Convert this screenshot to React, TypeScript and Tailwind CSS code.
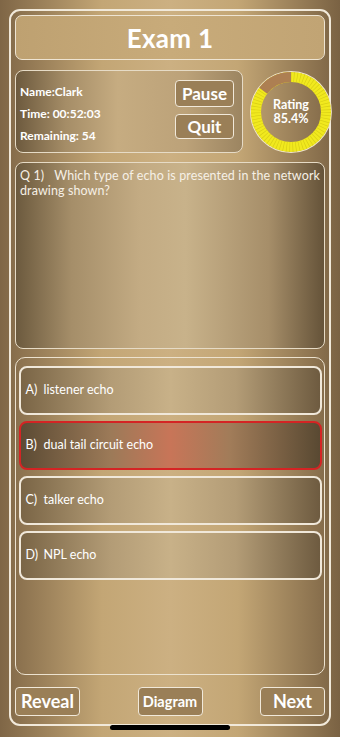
import React from "react";

const answers = [
  { key: "A)", text: "listener echo", picked: false },
  { key: "B)", text: "dual tail circuit echo", picked: true },
  { key: "C)", text: "talker echo", picked: false },
  { key: "D)", text: "NPL echo", picked: false },
];

function RatingRing({ value }: { value: number }) {
  const r = 35;
  const c = 2 * Math.PI * r;
  const miss = (100 - value) / 100;
  return (
    <div className="relative w-[82px] h-[82px] shrink-0">
      <svg width="82" height="82" viewBox="0 0 82 82" className="absolute inset-0">
        <circle cx="41" cy="41" r="40.3" fill="none" stroke="#efe4cc" strokeWidth="1.2" />
        <circle cx="41" cy="41" r={r} fill="none" stroke="#f1e91e" strokeWidth="10" />
        <circle
          cx="41"
          cy="41"
          r={r}
          fill="none"
          stroke="#d9cf16"
          strokeWidth="10"
          strokeDasharray="0.7 2.4"
        />
        <circle
          cx="41"
          cy="41"
          r={r}
          fill="none"
          stroke="#ad7f52"
          strokeWidth="10"
          strokeDasharray={`${miss * c} ${c}`}
          transform={`rotate(${-90 - miss * 360} 41 41)`}
        />
      </svg>
      <div className="absolute inset-0 flex flex-col items-center justify-center text-white font-bold text-[12.5px] leading-[14px]">
        <span>Rating</span>
        <span>{value}%</span>
      </div>
    </div>
  );
}

function SmallButton({ label, cls }: { label: string; cls: string }) {
  return (
    <div
      className={`flex items-center justify-center rounded-[4px] border-[1.5px] border-[#f1e9da] bg-[#9a7f57] text-white font-bold ${cls}`}
    >
      {label}
    </div>
  );
}

export default function App() {
  return (
    <div
      className="w-[340px] h-[737px] overflow-hidden pt-[9px] px-[9px] bg-[linear-gradient(to_right,#7f6646,#c3a675_30%,#ccb082_50%,#c3a675_70%,#7a6243)]"
      style={{ fontFamily: "Lato, 'Open Sans', 'Liberation Sans', sans-serif" }}
    >
      <div className="relative h-[717px] rounded-[11px] border-2 border-[#f1e9da] px-[4px] pt-[4px] flex flex-col">
        {/* title */}
        <div className="h-[45px] rounded-[7px] border-[1.5px] border-[#eee4d2] bg-[linear-gradient(to_right,#bea171,#c8ab7a_50%,#c1a474)] flex items-center justify-center">
          <span className="text-white font-bold text-[26px] leading-none tracking-[0.3px]">Exam 1</span>
        </div>

        {/* info row */}
        <div className="mt-[10px] flex items-center">
          <div className="w-[228px] h-[83px] shrink-0 rounded-[8px] border-[1.5px] border-[#e6dbc6] bg-[linear-gradient(to_right,#6d5a3e,#a58d67_22%,#c6ac81_45%,#bca279_75%,#9c8561)] flex items-center justify-between pl-[4px] pr-[8px]">
            <div className="flex flex-col gap-[7px] mt-[4px] text-white font-bold text-[12px] leading-[15px]">
              <span>Name:Clark</span>
              <span>Time: 00:52:03</span>
              <span>Remaining: 54</span>
            </div>
            <div className="flex flex-col gap-[7px] mt-[-4px]">
              <SmallButton label="Pause" cls="w-[59px] h-[27px] text-[17px]" />
              <SmallButton label="Quit" cls="w-[59px] h-[25px] text-[17px]" />
            </div>
          </div>
          <div className="ml-[7px]">
            <RatingRing value={85.4} />
          </div>
        </div>

        {/* question */}
        <div className="mt-[9px] h-[187px] rounded-[8px] border-[1.5px] border-[#e6dbc6] bg-[linear-gradient(to_right,#6c5a3e,#a58e69_18%,#c3ab83_40%,#c8b28a_55%,#a68e69_82%,#655339)] px-[4px] pt-[5px]">
          <p className="text-[#f6f0e6] text-[12.5px] tracking-[0.1px] leading-[15px] text-justify">
            Q 1)&nbsp;&nbsp; Which type of echo is presented in the network drawing shown?
          </p>
        </div>

        {/* answers */}
        <div className="mt-[8px] h-[318px] rounded-[10px] border-[1.5px] border-[#ece2cf] px-[2.5px] pt-[7.5px] flex flex-col gap-[6px]">
          {answers.map((a) => (
            <div
              key={a.key}
              className={
                a.picked
                  ? "h-[49px] rounded-[8px] border-2 border-[#d42424] bg-[linear-gradient(to_right,#5c4b34,#9c7a58_30%,#c87558_50%,#a17c59_70%,#594932)] flex items-center pl-[5px] text-white text-[12.5px]"
                  : "h-[49px] rounded-[8px] border-2 border-[#f0e8da] bg-[linear-gradient(to_right,#7a6546,#b39c76_30%,#c8b188_50%,#b39c76_72%,#6e5b40)] flex items-center pl-[5px] text-white text-[12.5px]"
              }
            >
              <span className="w-[18px]">{a.key}</span>
              <span>{a.text}</span>
            </div>
          ))}
        </div>

        {/* bottom buttons */}
        <div className="mt-[12px] flex items-center justify-between">
          <SmallButton label="Reveal" cls="w-[65px] h-[29px] text-[18px]" />
          <SmallButton label="Diagram" cls="w-[65px] h-[29px] text-[14.5px]" />
          <SmallButton label="Next" cls="w-[65px] h-[29px] text-[18px]" />
        </div>

        {/* home indicator */}
        <div className="absolute left-[99px] bottom-[-6px] w-[120px] h-[5px] rounded-full bg-black" />
      </div>
    </div>
  );
}
